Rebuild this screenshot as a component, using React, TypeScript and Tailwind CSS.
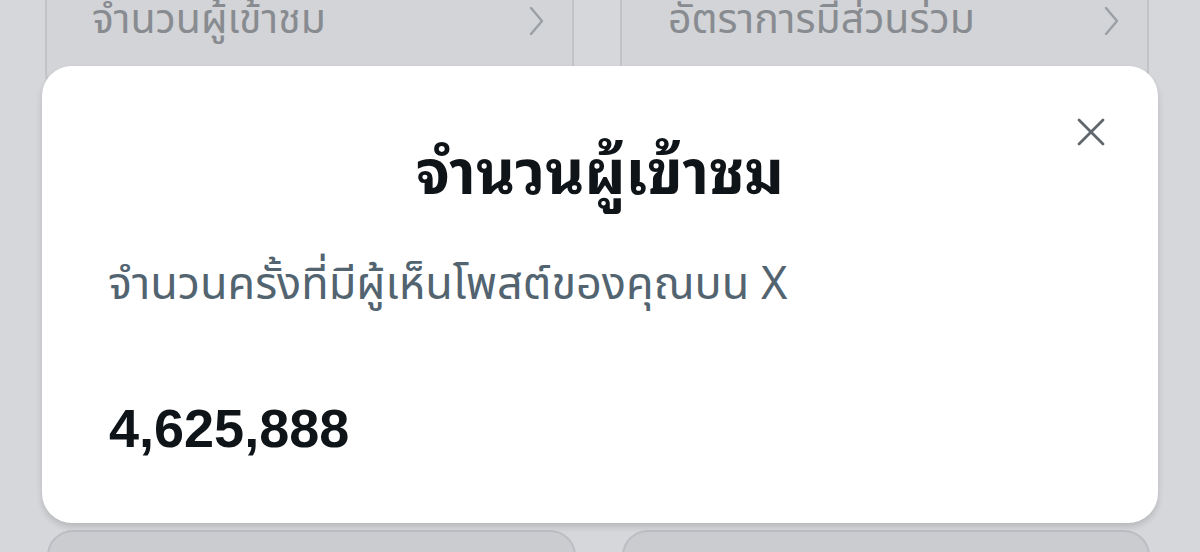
import React from "react";

const thai = { fontFamily: '"Noto Sans Thai", "Noto Sans", "Liberation Sans", sans-serif' };
const thaiLooped = { fontFamily: '"Noto Sans Thai Looped", "Noto Sans Thai", "Noto Sans", "Liberation Sans", sans-serif' };

function BgCard({ label, pl }: { label: string; pl: string }) {
  return (
    <div className={`h-[140px] -mt-[40px] rounded-[28px] border-2 border-[#c2c3c7] bg-[#d3d4d7] flex items-start pt-[38px] pr-[24px] ${pl}`}>
      <div className="flex-1 text-[41px] leading-none text-[#888c91]" style={thai}>{label}</div>
      <svg width="22" height="34" viewBox="0 0 22 34" className="mt-[4px]">
        <path d="M5 4 L16 17 L5 30" stroke="#9ba0a5" strokeWidth="2.4" fill="none" strokeLinecap="round" strokeLinejoin="round" />
      </svg>
    </div>
  );
}

export default function App() {
  return (
    <div className="relative w-[1200px] h-[552px] overflow-hidden bg-[#d6d7da]">
      <div className="grid grid-cols-2 gap-[46px] pl-[45px] pr-[51px]">
        <BgCard label="จำนวนผู้เข้าชม" pl="pl-[45px]" />
        <BgCard label="อัตราการมีส่วนร่วม" pl="pl-[46px]" />
      </div>
      <div className="grid grid-cols-2 gap-[46px] pl-[47px] pr-[50px] mt-[430px]">
        <div className="h-[80px] rounded-[26px] border-2 border-[#bdbec3] bg-[#cbcccf]" />
        <div className="h-[80px] rounded-[26px] border-2 border-[#bdbec3] bg-[#cbcccf]" />
      </div>

      <div className="absolute left-[42px] top-[66px] w-[1116px] h-[457px] rounded-[30px] bg-white shadow-[0_4px_6px_rgba(0,0,0,0.14)]">
        <button className="absolute right-[53px] top-[52px] w-[28px] h-[28px] flex items-center justify-center">
          <svg width="28" height="28" viewBox="0 0 28 28">
            <path d="M2 2 L26 26 M26 2 L2 26" stroke="#5f666d" strokeWidth="2.8" strokeLinecap="round" />
          </svg>
        </button>
        <div className="pt-[71px] text-center text-[60px] leading-none font-bold text-[#0f1419]" style={thaiLooped}>
          จำนวนผู้เข้าชม
        </div>
        <div className="pl-[66px] mt-[66px] text-[45px] leading-none text-[#536471]" style={thai}>
          จำนวนครั้งที่มีผู้เห็นโพสต์ของคุณบน X
        </div>
        <div className="pl-[67px] mt-[93px] text-[54px] leading-none font-bold text-[#0f1419]" style={{ fontFamily: '"Liberation Sans", Arial, sans-serif' }}>
          4,625,888
        </div>
      </div>
    </div>
  );
}
